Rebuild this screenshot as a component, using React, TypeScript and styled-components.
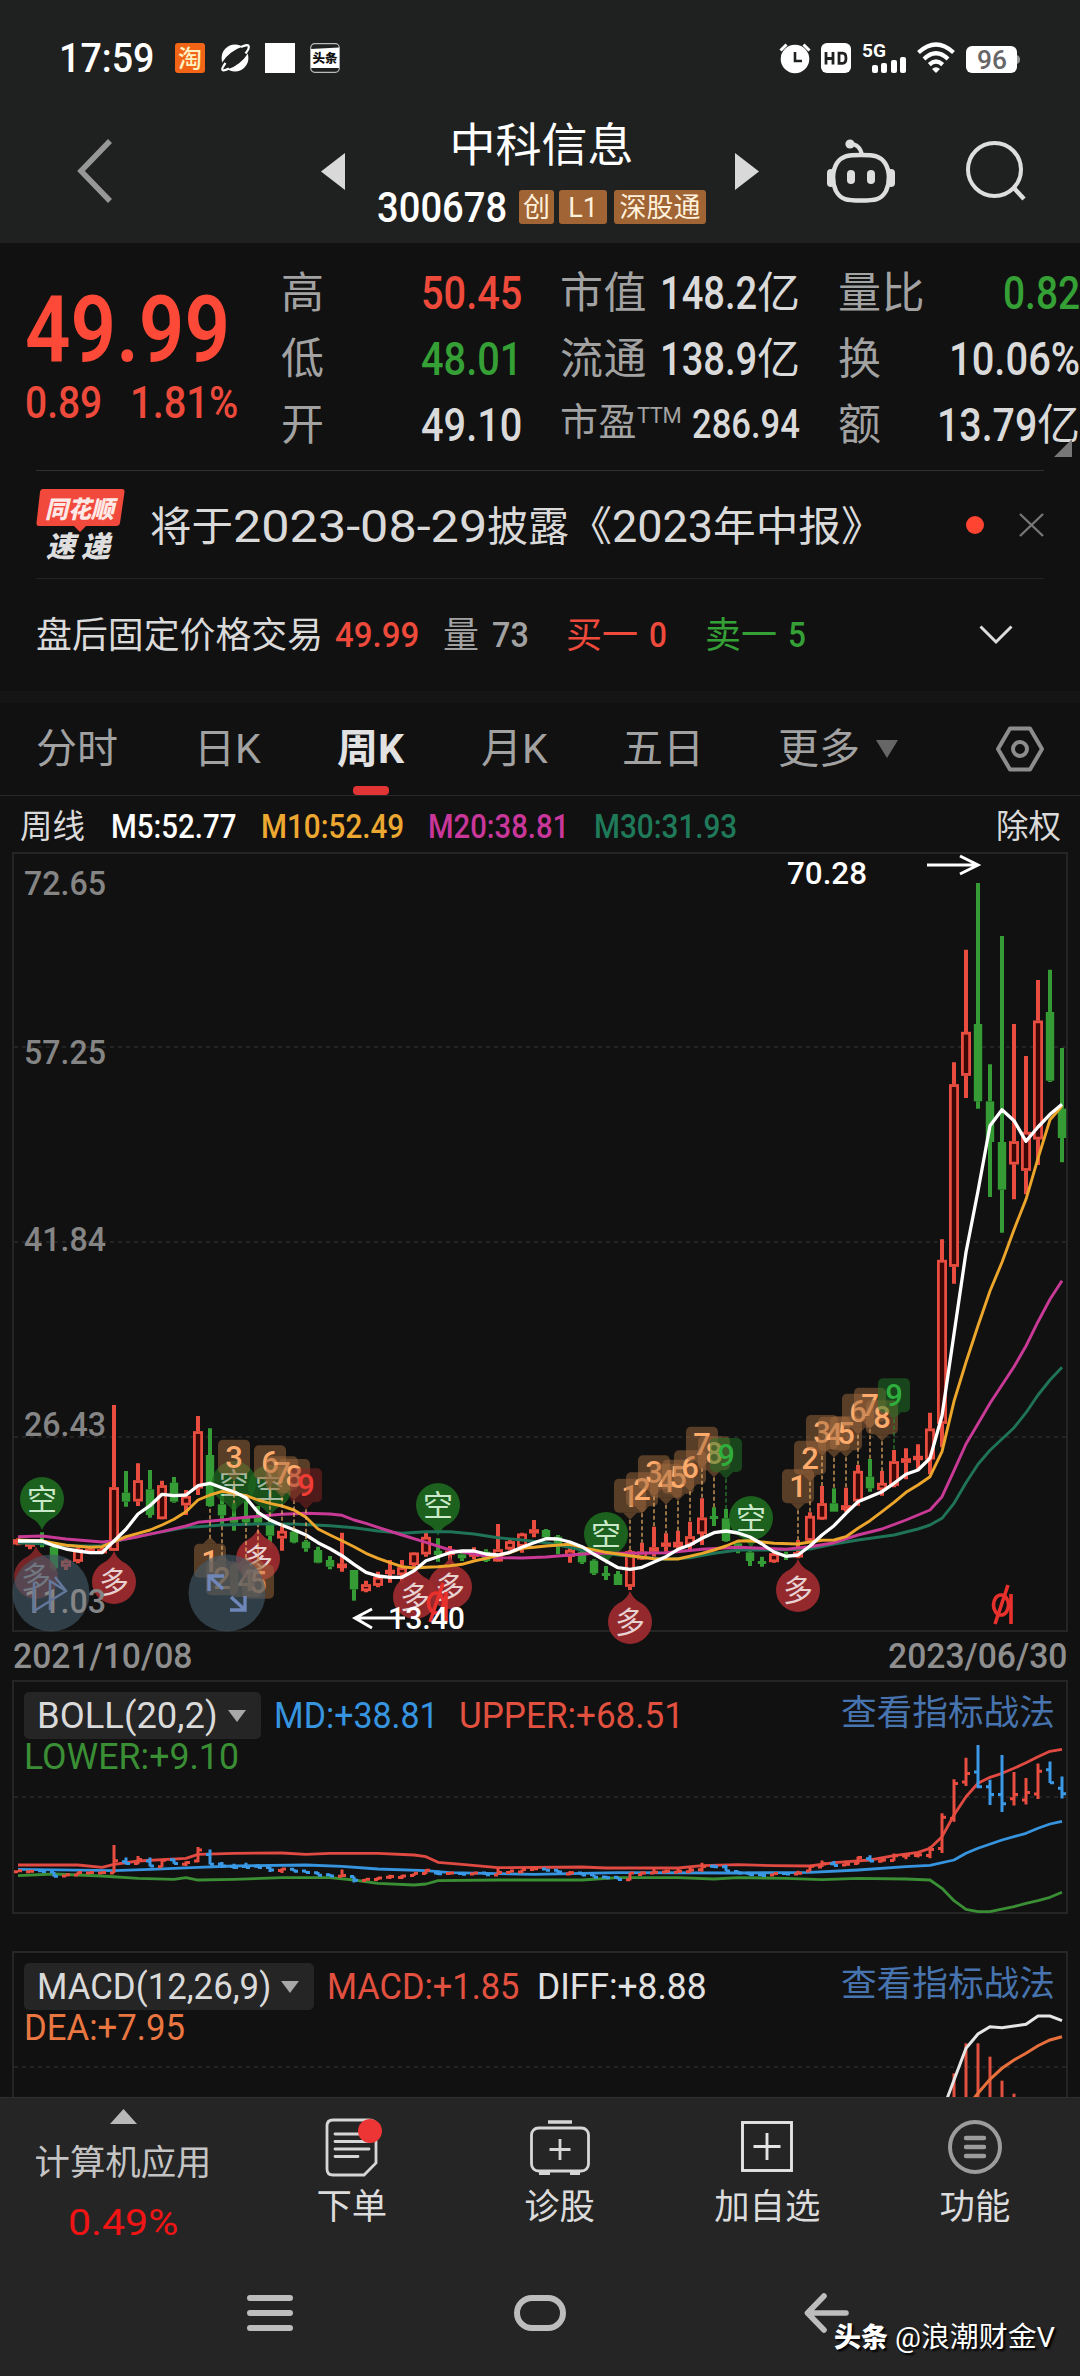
import React, { useLayoutEffect, useRef, useState } from "react";
import styled, { createGlobalStyle } from "styled-components";

const FONT = 'Roboto, "Noto Sans CJK SC", sans-serif';
const RED = "#ee4a3c";
const GREEN = "#35a035";
const GREY = "#a2a2a2";
const LIGHT = "#dadada";

const GlobalStyle = createGlobalStyle`
  html, body { margin: 0; background: #111111; }
  body { width: 1080px; font-family: ${FONT}; color: ${LIGHT}; }
  * { box-sizing: border-box; }
  svg { display: block; overflow: visible; flex: none; }
`;

/* ---------- text fitted to a fixed measure ---------- */

const FitBox = styled.span<{ $w: number; $size: number; $color?: string; $weight?: number; $ml?: number; $lh?: number }>`
  display: block;
  flex: none;
  width: ${(p) => p.$w}px;
  margin-left: ${(p) => p.$ml ?? 0}px;
  font-size: ${(p) => p.$size}px;
  line-height: ${(p) => p.$lh ?? Math.round(p.$size * 1.2)}px;
  color: ${(p) => p.$color ?? "inherit"};
  font-weight: ${(p) => p.$weight ?? 400};
  white-space: nowrap;
`;
const FitInner = styled.span`
  display: inline-block;
  transform-origin: 0 50%;
  white-space: pre;
`;

type FitProps = {
  w: number;
  size: number;
  color?: string;
  weight?: number;
  ml?: number;
  lh?: number;
  children: React.ReactNode;
};

function Fit({ w, size, color, weight, ml, lh, children }: FitProps) {
  const ref = useRef<HTMLSpanElement>(null);
  const [k, setK] = useState(1);
  useLayoutEffect(() => {
    if (ref.current && ref.current.offsetWidth) setK(w / ref.current.offsetWidth);
  }, [w, children]);
  return (
    <FitBox $w={w} $size={size} $color={color} $weight={weight} $ml={ml} $lh={lh}>
      <FitInner ref={ref} style={{ transform: `translateY(1px) scaleX(${k})` }}>
        {children}
      </FitInner>
    </FitBox>
  );
}

/* ---------- status bar and header ---------- */

const Page = styled.main`
  width: 1080px;
  height: 2376px;
  overflow: hidden;
  display: flex;
  flex-direction: column;
  background: #111111;
`;
const Top = styled.header`
  background: #1f2120;
  height: 243px;
  flex: none;
`;
const StatusBar = styled.div`
  display: flex;
  align-items: center;
  justify-content: space-between;
  height: 116px;
  padding: 0 60px 0 59px;
`;
const Cluster = styled.div<{ $gap: number }>`
  display: flex;
  align-items: center;
  gap: ${(p) => p.$gap}px;
`;
const TitleBar = styled.div`
  display: flex;
  align-items: center;
  height: 110px;
  padding-left: 77px;
`;
const Slot = styled.div<{ $ml: number }>`
  margin-left: ${(p) => p.$ml}px;
  flex: none;
`;
const TitleBlock = styled.div`
  margin-left: 32px;
  width: 329px;
  display: flex;
  flex-direction: column;
  align-items: center;
  gap: 20px;
`;
const StockName = styled.h1`
  margin: 0;
  font-size: 46px;
  line-height: 54px;
  height: 52px;
  font-weight: 400;
  color: #fff;
`;
const CodeRow = styled.div`
  display: flex;
  align-items: center;
  height: 34px;
  width: 100%;
`;
const Badge = styled.span<{ $w: number; $ml: number }>`
  width: ${(p) => p.$w}px;
  margin-left: ${(p) => p.$ml}px;
  height: 34px;
  border-radius: 3px;
  background: #a06435;
  color: #fff1da;
  font-size: 27px;
  line-height: 36px;
  text-align: center;
  white-space: nowrap;
  overflow: hidden;
`;

const StatusIcons = () => (
  <>
    <Cluster $gap={15}>
      <Fit w={95} size={40} color="#fff" weight={500}>17:59</Fit>
      <Slot $ml={6}>
        <svg width="30" height="30" viewBox="0 0 30 30">
          <rect width="30" height="30" rx="3" fill="#f26516" />
          <text x="15" y="24" fontSize="24" textAnchor="middle" fill="#fff0c0" fontWeight="500">淘</text>
        </svg>
      </Slot>
      <svg width="30" height="30" viewBox="0 0 30 30">
        <circle cx="15" cy="15" r="13.4" fill="#fff" />
        <ellipse cx="15" cy="15" rx="17" ry="6.6" transform="rotate(-38 15 15)" fill="#1f2120" />
        <path d="M5.500 20C3 23.500 1.500 26 2.500 27C3.500 28 6 27 9 25.500" stroke="#fff" strokeWidth="2.200" fill="none" />
        <path d="M21 4C25 2 28 1.800 28.600 3C29.200 4.500 27.500 8 25.500 10.500" stroke="#fff" strokeWidth="2.200" fill="none" />
      </svg>
      <svg width="30" height="30"><rect width="30" height="30" fill="#fff" /></svg>
      <svg width="30" height="30" viewBox="0 0 30 30">
        <rect x=".7" y=".7" width="28.600" height="28.600" rx="4" fill="#1f2120" stroke="#bbb" strokeWidth="1.200" />
        <path d="M1 6L29 4.500V25H1Z" fill="#fff" />
        <text x="15" y="20" fontSize="12.500" textAnchor="middle" fill="#111" fontWeight="900">头条</text>
      </svg>
    </Cluster>
    <Cluster $gap={10}>
      <svg width="32" height="30" viewBox="0 0 32 30">
        <circle cx="16" cy="16" r="14.300" fill="#fff" />
        <path d="M1.500 7.500L7.500 1.500M30.500 7.500L24.500 1.500" stroke="#fff" strokeWidth="3" />
        <path d="M16 9V18H23" stroke="#1f2120" strokeWidth="2.600" fill="none" />
      </svg>
      <svg width="30" height="30" viewBox="0 0 30 30">
        <rect width="30" height="30" rx="6" fill="#fff" />
        <path d="M5 9V21.500M12 9V21.500M5 15.500H12M18 10.200H21.500Q25 10.200 25 15.200Q25 20.300 21.500 20.300H18Z" stroke="#1f2120" strokeWidth="2.800" fill="none" />
      </svg>
      <svg width="46" height="30" viewBox="0 0 46 30">
        <text x="1" y="14" fontSize="19" fontWeight="700" fill="#fff" textLength="24" lengthAdjust="spacingAndGlyphs">5G</text>
        <rect x="11" y="22" width="6" height="8" rx="2" fill="#fff" />
        <rect x="20" y="20" width="6" height="10" rx="2" fill="#fff" />
        <rect x="30" y="17" width="6" height="13" rx="2" fill="#fff" />
        <rect x="39" y="14" width="6" height="16" rx="2" fill="#fff" />
      </svg>
      <svg width="38" height="30" viewBox="0 0 38 30">
        <path d="M1.500 9.500Q19-6.500 36.500 9.500" stroke="#fff" strokeWidth="4.200" fill="none" />
        <path d="M7 16Q19 4.500 31 16" stroke="#fff" strokeWidth="4.200" fill="none" />
        <path d="M12.300 21.600Q19 15.500 25.700 21.600" stroke="#fff" strokeWidth="4.200" fill="none" />
        <path d="M15 26Q19 22.500 23 26L19 30Z" fill="#fff" />
      </svg>
      <svg width="55" height="30" viewBox="0 0 55 30">
        <rect x="1" y="3" width="51" height="27" rx="6" fill="#fff" />
        <path d="M52 12Q55 13 55 16.500Q55 20 52 21Z" fill="#999" />
        <text x="12" y="26" fontSize="26" fontWeight="500" fill="#666" textLength="30" lengthAdjust="spacingAndGlyphs">96</text>
      </svg>
    </Cluster>
  </>
);

/* ---------- quote block ---------- */

const Quote = styled.section`
  position: relative;
  display: flex;
  height: 227px;
  padding-top: 16px;
  flex: none;
`;
const PriceCol = styled.div`
  width: 281px;
  padding: 31px 0 0 25px;
  flex: none;
`;
const ChangeRow = styled.div`
  display: flex;
  align-items: center;
  height: 65px;
`;
const Stats = styled.div`
  display: grid;
  grid-template-columns: 241px 240px 242px;
  grid-auto-rows: 66px;
  column-gap: 38px;
`;
const Stat = styled.div`
  display: flex;
  align-items: center;
  justify-content: space-between;
`;
const StatLabel = styled.span<{ $size?: number }>`
  color: ${GREY};
  font-size: ${(p) => p.$size ?? 43}px;
  line-height: 60px;
  padding-top: 1px;
  letter-spacing: 0.5px;
  white-space: nowrap;
`;
const Sup = styled.span`
  font-size: 22px;
  letter-spacing: -0.5px;
  position: relative;
  top: -12px;
`;
const Value = styled.span`
  display: flex;
  align-items: center;
`;
const Corner = styled.i`
  position: absolute;
  right: 8px;
  bottom: 13px;
  border-left: 18px solid transparent;
  border-bottom: 18px solid #777;
`;
const Rule = styled.div<{ $c?: string; $full?: boolean }>`
  height: 1px;
  margin: 0 ${(p) => (p.$full ? 0 : 36)}px;
  background: ${(p) => p.$c ?? "#303030"};
  flex: none;
`;

type Num = { label: string; text: string; w: number; unit?: boolean; color?: string };
const STATS: Num[] = [
  { label: "高", text: "50.45", w: 101, color: RED },
  { label: "市值", text: "148.2", w: 97, unit: true },
  { label: "量比", text: "0.82", w: 77, color: GREEN },
  { label: "低", text: "48.01", w: 101, color: GREEN },
  { label: "流通", text: "138.9", w: 97, unit: true },
  { label: "换", text: "10.06%", w: 131 },
  { label: "开", text: "49.10", w: 101 },
  { label: "市盈", text: "286.94", w: 108 },
  { label: "额", text: "13.79", w: 100, unit: true },
];

/* ---------- news and after-hours rows ---------- */

const News = styled.section`
  display: flex;
  align-items: center;
  height: 107px;
  padding: 0 36px;
  flex: none;
`;
const Headline = styled.div`
  display: flex;
  align-items: center;
  margin-left: 25px;
  padding-top: 3px;
`;
const Push = styled.span`
  margin-left: auto;
`;
const After = styled.section`
  display: flex;
  align-items: center;
  height: 112px;
  padding: 0 67px 0 36px;
  flex: none;
`;
const Band = styled.div`
  height: 12px;
  background: #151515;
  flex: none;
`;

/* ---------- tabs ---------- */

const Tabs = styled.nav`
  display: flex;
  align-items: center;
  height: 92px;
  padding-left: 36px;
  flex: none;
`;
const Tab = styled.span<{ $w: number; $ml?: number; $active?: boolean }>`
  position: relative;
  width: ${(p) => p.$w}px;
  margin-left: ${(p) => p.$ml ?? 0}px;
  font-size: 41px;
  line-height: 92px;
  white-space: nowrap;
  color: ${(p) => (p.$active ? "#e2e2e2" : GREY)};
  font-weight: ${(p) => (p.$active ? 700 : 400)};
  &::after {
    content: "";
    display: ${(p) => (p.$active ? "block" : "none")};
    position: absolute;
    left: 16px;
    bottom: 0;
    width: 36px;
    height: 9px;
    border-radius: 4px;
    background: #e13535;
  }
`;
const MaRow = styled.div`
  display: flex;
  align-items: center;
  height: 56px;
  padding: 4px 19px 0 20px;
  flex: none;
`;

/* ---------- charts ---------- */

const ChartBox = styled.section`
  height: 780px;
  flex: none;
  z-index: 1;
`;
const Dates = styled.div`
  display: flex;
  justify-content: space-between;
  align-items: center;
  height: 48px;
  padding: 0 13px;
  color: #8e8e8e;
  flex: none;
`;
const Panel = styled.section<{ $h: number; $mb?: number }>`
  position: relative;
  height: ${(p) => p.$h}px;
  margin-bottom: ${(p) => p.$mb ?? 0}px;
  padding: 12px 25px 0 24px;
  overflow: hidden;
  flex: none;
`;
const PanelPlot = styled.div`
  position: absolute;
  left: 0;
  top: 0;
`;
const PanelRow = styled.div<{ $h: number }>`
  position: relative;
  display: flex;
  align-items: center;
  height: ${(p) => p.$h}px;
`;
const Picker = styled.span<{ $w: number }>`
  display: flex;
  align-items: center;
  justify-content: space-between;
  width: ${(p) => p.$w}px;
  height: 47px;
  padding: 0 15px 0 13px;
  border-radius: 5px;
  background: #252525;
`;
const Guide = styled.span`
  margin-left: auto;
  padding-bottom: 4px;
  font-size: 35.7px;
  line-height: 43px;
  color: #4774ae;
`;

const X = (i: number) => 18 + 12 * i;
const Y = (u: number) => 1360 + u / 3;

type Candle = [number, number, number, number, 0 | 1];
/* high, body top, body bottom, low, rising */
const CANDLES: Candle[] = [
  [535, 538, 553, 556, 1], [540, 548, 553, 568, 1], [517, 540, 550, 562, 0], [558, 560, 625, 632, 0],
  [598, 602, 620, 630, 1], [555, 567, 605, 610, 1], [560, 566, 572, 575, 1], [562, 568, 574, 577, 1],
  [135, 382, 572, 572, 1], [333, 398, 425, 440, 0], [310, 361, 424, 438, 1], [330, 388, 465, 473, 0],
  [362, 376, 477, 478, 1], [351, 368, 425, 428, 0], [390, 408, 436, 465, 1], [168, 214, 385, 405, 1],
  [205, 285, 438, 440, 0], [400, 433, 466, 495, 0], [430, 470, 488, 512, 0], [415, 470, 487, 490, 0],
  [438, 468, 488, 495, 0], [480, 487, 527, 560, 0], [500, 513, 535, 572, 1], [510, 515, 547, 550, 0],
  [540, 545, 565, 575, 0], [560, 570, 608, 610, 0], [588, 600, 620, 628, 0], [518, 611, 624, 635, 1],
  [630, 630, 688, 722, 0], [662, 673, 693, 697, 1], [635, 651, 677, 682, 1], [600, 630, 642, 668, 1],
  [600, 622, 645, 668, 1], [577, 578, 615, 620, 1], [515, 531, 583, 590, 1], [535, 572, 585, 605, 0],
  [558, 573, 582, 600, 1], [575, 583, 595, 603, 0], [562, 576, 590, 598, 1], [568, 575, 603, 606, 0],
  [492, 568, 604, 605, 1], [540, 544, 568, 572, 1], [518, 521, 560, 578, 1], [480, 508, 520, 532, 1],
  [507, 510, 532, 537, 0], [525, 530, 560, 583, 0], [545, 570, 590, 608, 1], [572, 575, 607, 612, 0],
  [598, 602, 640, 645, 0], [618, 639, 648, 660, 0], [633, 642, 675, 675, 0], [570, 574, 680, 690, 1],
  [548, 575, 598, 600, 1], [500, 562, 575, 590, 1], [520, 548, 560, 575, 1], [512, 546, 562, 575, 1],
  [485, 529, 555, 570, 1], [415, 473, 522, 555, 1], [442, 468, 477, 498, 0], [447, 475, 543, 545, 0],
  [540, 550, 572, 580, 0], [570, 577, 603, 618, 0], [590, 603, 612, 620, 0], [575, 580, 606, 608, 1],
  [575, 582, 590, 600, 0], [540, 577, 592, 595, 1], [457, 468, 542, 545, 1], [378, 430, 478, 480, 1],
  [385, 430, 455, 455, 0], [383, 436, 450, 455, 1], [315, 333, 424, 437, 1], [297, 350, 385, 395, 0],
  [333, 369, 390, 407, 1], [270, 304, 377, 382, 1], [265, 295, 308, 358, 1], [253, 288, 300, 330, 1],
  [158, 206, 298, 343, 1], [-362, -300, 191, 262, 1], [-893, -827, -280, -229, 1], [-1231, -984, -853, -786, 1],
  [-1431, -1008, -776, -754, 0], [-887, -776, -654, -489, 0], [-1272, -654, -511, -382, 0], [-1008, -656, -587, -482, 1],
  [-912, -684, -568, -497, 1], [-1140, -1018, -662, -585, 1], [-1171, -1044, -838, -834, 0], [-936, -754, -666, -593, 0],
];

type Pts = [number, number][];
const seq = (from: number, v: number[]): Pts => v.map((u, k) => [from + k, u]);

const M5: Pts = seq(0, [
  543, 543, 543, 557, 567, 573, 578, 578, 543, 508, 462, 437, 403, 407, 405, 377, 370, 383, 395, 413, 457, 480, 496, 509,
  525, 548, 566, 587, 613, 637, 648, 652, 652, 632, 602, 590, 578, 573, 573, 582, 585, 577, 562, 548, 536, 537, 546, 560,
  583, 603, 623, 628, 622, 606, 590, 568, 555, 535, 518, 513, 519, 531, 552, 576, 589, 585, 558, 525, 497, 460, 425, 410,
  395, 370, 343, 330, 295, 167, -78, -323, -507, -703, -751, -718, -656, -699, -737, -767,
]);
const M10: Pts = [
  [0, 540], [2, 543], [4, 556], [6, 562], [7, 560],
  ...seq(8, [545, 530, 520, 510, 495, 478, 455, 420, 405, 394, 400, 407, 420, 430, 438, 450, 472, 507, 525, 542, 560, 580, 595, 608, 620, 624, 622, 620, 617, 613, 603, 595, 587, 578, 565, 562, 558]),
  [46, 553], [47, 562], [49, 577], [51, 587], [53, 596], [55, 597], [57, 580], [58, 570], [59, 558], [60, 543], [61, 542], [63, 550], [65, 552],
  ...seq(66, [546, 541, 540, 530, 505, 482, 455, 427, 397, 375, 350, 275, 124, 7, -103, -207, -293, -391, -482, -605, -721, -762]),
];
const M20: Pts = [
  [0, 530], [2, 528], [4, 537], [7, 546], [8, 543], [10, 530], [12, 515], [14, 498], [15, 487], [17, 480], [19, 472], [22, 463],
  [24, 460], [26, 462], [27, 466], [28, 480], [29, 490], [30, 502], [32, 525], [34, 547], [36, 570], [38, 582], [40, 593], [42, 594],
  [44, 591], [46, 585], [48, 580], [51, 580], [54, 578], [57, 568], [60, 562], [62, 565], [64, 568], [66, 560], [68, 548], [70, 525],
  [72, 507], [74, 480], [76, 450], ...seq(77, [410, 332, 252, 191, 130, 75, 20, -42, -115, -182, -238]),
];
const M30: Pts = [
  [0, 548], [3, 553], [5, 558], [7, 557], [8, 545], [10, 530], [12, 515], [14, 502], [15, 500], [17, 495], [20, 492], [23, 492],
  [26, 497], [28, 503], [30, 513], [32, 520], [34, 515], [36, 515], [38, 522], [40, 533], [42, 540], [44, 548], [47, 570], [50, 585],
  [54, 598], [56, 593], [58, 580], [60, 570], [63, 570], [66, 567], [68, 552], [70, 540], [73, 525], [75, 507], [76, 495], [77, 475],
  [78, 430], [79, 368], [80, 313], [81, 271], [82, 237], [83, 203], [84, 158], [85, 105], [86, 60], [87, 22],
];

const line = (p: Pts, y: (u: number) => number) => p.map(([i, u]) => `${X(i)},${y(u).toFixed(1)}`).join(" ");

const CandleShape = ({ i, c }: { i: number; c: Candle }) => {
  const [h, t, b, l, up] = c;
  const x = X(i);
  const col = up ? "#e84d40" : "#359b35";
  const hh = Math.max((b - t) / 3, 2.5);
  return (
    <g>
      <path d={`M${x} ${Y(h)}V${Y(t)}M${x} ${Y(t) + hh}V${Y(l)}`} stroke={col} strokeWidth="4" />
      {up ? (
        <rect x={x - 3.6} y={Y(t) + 1.2} width="7.200" height={Math.max(hh - 2.4, 1.5)} fill="#3a0907" stroke={col} strokeWidth="2.800" />
      ) : (
        <rect x={x - 4.2} y={Y(t)} width="8.400" height={hh} fill={col} />
      )}
    </g>
  );
};

/* round 空 / 多 signal pin */
const Pin = ({ x, y, up, dim }: { x: number; y: number; up?: boolean; dim?: boolean }) => (
  <g opacity={dim ? 0.75 : 0.95}>
    <circle cx={x} cy={y} r="22" fill={up ? "#9a2b2e" : "#1d661e"} />
    <path
      d={up ? `M${x - 12} ${y - 18}Q${x - 3} ${y - 23} ${x} ${y - 31}Q${x + 3} ${y - 23} ${x + 12} ${y - 18}Z` : `M${x - 12} ${y + 18}Q${x - 3} ${y + 23} ${x} ${y + 31}Q${x + 3} ${y + 23} ${x + 12} ${y + 18}Z`}
      fill={up ? "#9a2b2e" : "#1d661e"}
    />
    <text x={x} y={y + 11} fontSize="30" textAnchor="middle" fill={up ? "#f4dcdc" : "#d4f4d4"} fontFamily={FONT}>
      {up ? "多" : "空"}
    </text>
  </g>
);

type TagData = [number, number, string, ("up" | "green" | "red")?];
const TAGS: TagData[] = [
  [16, 602, "1", "up"], [17, 655, "2", "up"], [19, 660, "4", "up"], [20, 665, "5", "up"], [18, 290, "3"], [21, 307, "6"],
  [22, 340, "7"], [23, 348, "8"], [24, 376, "9", "red"],
  [51, 407, "1"], [52, 388, "2"], [53, 337, "3"], [54, 362, "4"], [55, 350, "5"], [56, 322, "6"], [57, 251, "7"], [58, 280, "8"], [59, 285, "9", "green"],
  [65, 379, "1"], [66, 293, "2"], [67, 216, "3"], [68, 221, "4"], [69, 220, "5"], [70, 152, "6"], [71, 134, "7"], [72, 172, "8"], [73, 106, "9", "green"],
];
const Tag = ({ d }: { d: TagData }) => {
  const [i, u, n, kind] = d;
  const x = X(i);
  const y = Y(u);
  const up = kind === "up";
  const fill = kind === "green" ? "#1f7a25" : kind === "red" ? "#8c2424" : "#a06a3e";
  const text = kind === "green" ? "#2fae3e" : kind === "red" ? "#f03c34" : "#ffab6c";
  const target = up ? Y(CANDLES[i][3]) : Y(CANDLES[i][0]);
  return (
    <g>
      <line x1={x} x2={x} y1={up ? y - 22 : y + 24} y2={target} stroke={kind === "green" ? "#2c8a34" : "#f0b56a"} strokeWidth="1.200" strokeDasharray="4 2.500" />
      <rect x={x - 16} y={y - 17} width="32" height="34" rx="5" fill={fill} opacity=".5" />
      <path d={up ? `M${x - 7} ${y - 17}L${x} ${y - 24}L${x + 7} ${y - 17}Z` : `M${x - 7} ${y + 17}L${x} ${y + 24}L${x + 7} ${y + 17}Z`} fill={fill} opacity=".5" />
      <text x={x} y={y + 11} fontSize="31" fontWeight="500" textAnchor="middle" fill={text} fontFamily={FONT} opacity={up && n !== "1" ? 0.7 : 1}>{n}</text>
    </g>
  );
};

/* ex-rights mark */
const ExMark = ({ x, y }: { x: number; y: number }) => (
  <g stroke="#e8302c" fill="none" strokeWidth="3.600">
    <ellipse cx={x - 2} cy={y} rx="7.500" ry="10" />
    <path d={`M${x + 8} ${y - 11}V${y + 19}M${x + 5} ${y - 20}L${x - 8} ${y + 19}`} />
  </g>
);

const AxisText = ({ y, children }: { y: number; children: string }) => (
  <text x="24" y={y + 12} fontSize="34" fontWeight="500" fill="#858585" textLength="82" lengthAdjust="spacingAndGlyphs">{children}</text>
);

const MainChart = () => (
  <svg width="1080" height="780" viewBox="0 852 1080 780" fontFamily={FONT}>
    <rect x="13" y="853" width="1054" height="778" fill="none" stroke="#282828" strokeWidth="1.800" />
    {[1047, 1242, 1437].map((y) => (
      <line key={y} x1="14" x2="1066" y1={y} y2={y} stroke="#2b2b2b" strokeWidth="1.600" strokeDasharray="4 4" />
    ))}
    <AxisText y={883}>72.65</AxisText>
    <AxisText y={1052}>57.25</AxisText>
    <AxisText y={1239}>41.84</AxisText>
    <AxisText y={1424}>26.43</AxisText>
    {CANDLES.map((c, i) => <CandleShape key={i} i={i} c={c} />)}
    <Pin x={42} y={1499} />
    <Pin x={234} y={1483} dim />
    <Pin x={270} y={1487} dim />
    <Pin x={438} y={1505} />
    <Pin x={606} y={1534} />
    <Pin x={751} y={1518} />
    <Pin x={114} y={1582} up />
    <Pin x={258} y={1559} up />
    <Pin x={415} y={1597} up />
    <Pin x={450} y={1587} up />
    <Pin x={630} y={1622} up />
    <Pin x={798} y={1590} up />
    <g fill="none" strokeWidth="2.900" strokeLinejoin="round">
      <polyline points={line(M30, Y)} stroke="#1f7358" />
      <polyline points={line(M20, Y)} stroke="#c83a96" />
      <polyline points={line(M10, Y)} stroke="#eda62c" />
      <polyline points={line(M5, Y)} stroke="#fff" strokeWidth="3.300" />
    </g>
    <Pin x={36} y={1577} up dim />
    {TAGS.map((d, k) => <Tag key={k} d={d} />)}
    <g fill="#445a6a" opacity=".62">
      <circle cx="51" cy="1593" r="38.500" />
      <circle cx="227" cy="1593" r="38.500" />
    </g>
    <AxisText y={1601}>11.03</AxisText>
    <path d="M34 1582V1611L66 1591L55 1577M50 1610V1581L66 1591" stroke="#63779b" strokeWidth="2.500" fill="none" />
    <g stroke="#6f86b8" strokeWidth="3.400" fill="none">
      <path d="M209 1591V1576H224M210 1577L223 1589" />
      <path d="M245 1596V1610H230M244 1609L231 1597" />
    </g>
    <text x="787" y="884" fontSize="31" fontWeight="500" fill="#fff" textLength="80" lengthAdjust="spacingAndGlyphs">70.28</text>
    <path d="M927 865H978M960 856L978 865L960 874" stroke="#fff" strokeWidth="3" fill="none" />
    <ExMark x={438} y={1603} />
    <ExMark x={1003} y={1605} />
    <text x="388" y="1629" fontSize="31" fontWeight="500" fill="#fff" textLength="77" lengthAdjust="spacingAndGlyphs">13.40</text>
    <path d="M405 1618H355M372 1609L355 1618L372 1628" stroke="#fff" strokeWidth="3" fill="none" />
  </svg>
);

const BY = (v: number) => 1660 + v / 3;
const toBoll = (u: number) => 529 + 0.1916 * u;
const UPPER: Pts = [
  [0, 615], [5, 615], [7, 622], [8, 613], [10, 603], [14, 595], [15, 583], [18, 580], [22, 579], [24, 583], [26, 580], [30, 580], [33, 585],
  [34, 590], [35, 607], [37, 613], [40, 623], [47, 621], [49, 624], [55, 624], [57, 617], [60, 614], [63, 617], [66, 618], [68, 608], [71, 600],
  [73, 587], [75, 577], [76, 565], [77, 530], [78, 465], [79, 410], [80, 370], [81, 352], [82, 340], [83, 325], [84, 308], [85, 290], [86, 274], [87, 268],
];
const MID: Pts = [
  [0, 628], [8, 632], [11, 628], [15, 622], [18, 618], [24, 615], [27, 619], [30, 627], [34, 632], [36, 638], [43, 643], [50, 638], [60, 639],
  [66, 637], [70, 630], [74, 620], [76, 616], [78, 600], [79, 580], [80, 565], [82, 540], [84, 520], [85, 505], [86, 492], [87, 484],
];
const LOWER: Pts = [
  [0, 647], [3, 642], [7, 648], [10, 655], [13, 658], [14, 653], [15, 660], [18, 658], [22, 653], [26, 653], [28, 660], [30, 670], [33, 675],
  [34, 672], [35, 662], [40, 660], [47, 660], [50, 653], [55, 653], [58, 657], [60, 653], [64, 655], [67, 659], [70, 655], [74, 657], [76, 660],
  [77, 685], [78, 722], [79, 748], [80, 755], [81, 755], [83, 740], [84, 730], [85, 722], [86, 712], [87, 697],
];

const BollPlot = () => (
  <svg width="1080" height="234" viewBox="0 1680 1080 234">
    <rect x="13" y="1681" width="1054" height="232" fill="none" stroke="#282828" strokeWidth="1.800" />
    <line x1="14" x2="1066" y1="1797" y2="1797" stroke="#2b2b2b" strokeWidth="1.600" strokeDasharray="4 4" />
    <g fill="none" strokeWidth="2.800" strokeLinejoin="round">
      <polyline points={line(LOWER, BY)} stroke="#3a8f35" />
      <polyline points={line(MID, BY)} stroke="#3795e0" />
      <polyline points={line(UPPER, BY)} stroke="#e04a42" />
    </g>
    {CANDLES.map(([h, t, b, l, up], i) => {
      const f = (u: number) => BY(toBoll(u)).toFixed(1);
      const x = X(i);
      return (
        <path
          key={i}
          d={`M${x} ${f(h)}V${f(l)}M${x - 4} ${f(up ? b : t)}H${x}M${x} ${f(up ? t : b)}H${x + 4}`}
          stroke={up ? "#e84d40" : "#3b9ae8"}
          strokeWidth="3"
        />
      );
    })}
  </svg>
);

const DIFF: Pts = [[77.4, 1318], [78, 1260], [79, 1165], [80, 1122], [81, 1100], [82, 1103], [83, 1098], [84, 1093], [85, 1068], [86, 1068], [87, 1082]];
const DEA: Pts = [[79.6, 1318], [80, 1300], [81, 1258], [82, 1225], [83, 1200], [84, 1180], [85, 1157], [86, 1140], [87, 1130]];
const HIST: Pts = [[78, 1240], [79, 1150], [80, 1150], [81, 1190], [82, 1262], [83, 1301]];

const MacdPlot = () => (
  <svg width="1080" height="146" viewBox="0 1951 1080 146">
    <path d="M13 2100V1952H1067V2100" fill="none" stroke="#282828" strokeWidth="1.800" />
    <line x1="14" x2="1066" y1="2067" y2="2067" stroke="#2b2b2b" strokeWidth="1.600" strokeDasharray="4 4" />
    {HIST.map(([i, v]) => <line key={i} x1={X(i)} x2={X(i)} y1={BY(v)} y2="2100" stroke="#e2503f" strokeWidth="3" />)}
    <polyline points={line(DIFF, BY)} fill="none" stroke="#e6e6e6" strokeWidth="3" />
    <polyline points={line(DEA, BY)} fill="none" stroke="#e8703c" strokeWidth="3" />
  </svg>
);

const Down = () => (
  <svg width="18" height="12" viewBox="0 0 18 12"><path d="M0 0H18L9 12Z" fill="#a8a8a8" /></svg>
);

/* ---------- bottom ---------- */

const Bottom = styled.footer`
  position: relative;
  height: 279px;
  background: #252525;
  border-top: 1px solid #303030;
  flex: none;
`;
const Tools = styled.div`
  display: grid;
  grid-template-columns: 248px repeat(4, 207.7px);
  height: 162px;
`;
const Sector = styled.div`
  display: flex;
  flex-direction: column;
  align-items: center;
  padding: 11px 2px 0 0;
  color: #c4c4c4;
`;
const SectorName = styled.span`
  font-size: 35.4px;
  line-height: 44px;
  margin: 17px 0 15px;
`;
const Tool = styled.div`
  display: flex;
  flex-direction: column;
  align-items: center;
  padding-top: 20px;
`;
const ToolLabel = styled.span`
  margin-top: 11px;
  font-size: 35.4px;
  line-height: 41px;
  color: #dcdcdc;
`;
const NavBar = styled.div`
  display: flex;
  align-items: center;
  height: 106px;
  padding-left: 247px;
`;
const Watermark = styled.div`
  position: absolute;
  left: 834px;
  top: 222px;
  display: flex;
  align-items: center;
  color: #fff;
  text-shadow: 2px 2px 2px #000;
`;

const DocIcon = () => (
  <svg width="54" height="58" viewBox="0 0 54 58">
    <path d="M8 2H44Q51 2 51 9V45L39 57H8Q2 57 2 51V8Q2 2 8 2Z" fill="none" stroke="#d6d6d6" strokeWidth="2.800" />
    <path d="M10 16H42M10 23.500H44M10 31H44M10 38.500H33" stroke="#d6d6d6" strokeWidth="2.800" strokeLinecap="round" />
    <circle cx="45" cy="13" r="12" fill="#ee3535" />
  </svg>
);
const KitIcon = () => (
  <svg width="60" height="58" viewBox="0 0 60 58">
    <path d="M18 4H42" stroke="#d6d6d6" strokeWidth="3.500" />
    <rect x="1.500" y="10" width="57" height="43" rx="7" fill="none" stroke="#d6d6d6" strokeWidth="2.800" />
    <path d="M30 21V42M19.500 31.500H40.500" stroke="#d6d6d6" strokeWidth="2.800" />
    <path d="M9 55H20M40 55H50" stroke="#d6d6d6" strokeWidth="4" />
  </svg>
);
const AddIcon = () => (
  <svg width="52" height="58" viewBox="0 0 52 58">
    <rect x="1.500" y="4.500" width="49" height="48" fill="none" stroke="#e4e4e4" strokeWidth="2.900" />
    <path d="M26 15V42M12.500 28.500H39.500" stroke="#e4e4e4" strokeWidth="2.900" />
  </svg>
);
const MenuIcon = () => (
  <svg width="54" height="58" viewBox="0 0 54 58">
    <circle cx="27" cy="29" r="25" fill="none" stroke="#9c9c9c" strokeWidth="4" />
    <path d="M18 20H36M18 29H36M18 38H36" stroke="#9c9c9c" strokeWidth="4.400" strokeLinecap="round" />
  </svg>
);

export default function App() {
  return (
    <>
      <GlobalStyle />
      <Page>
        <Top>
          <StatusBar><StatusIcons /></StatusBar>
          <TitleBar>
            <svg width="35" height="64" viewBox="0 0 35 64"><path d="M33 2L4 32L33 62" fill="none" stroke="#979797" strokeWidth="5.500" /></svg>
            <Slot $ml={209}>
              <svg width="24" height="37" viewBox="0 0 24 37"><path d="M24 0V37L0 18.500Z" fill="#d9d9d9" /></svg>
            </Slot>
            <TitleBlock>
              <StockName>中科信息</StockName>
              <CodeRow>
                <Fit w={130} size={42} color="#fff" weight={500} lh={34}>300678</Fit>
                <Badge $w={35} $ml={12}>创</Badge>
                <Badge $w={48} $ml={5}>L1</Badge>
                <Badge $w={92} $ml={7}>深股通</Badge>
              </CodeRow>
            </TitleBlock>
            <Slot $ml={29}>
              <svg width="24" height="37" viewBox="0 0 24 37"><path d="M0 0V37L24 18.500Z" fill="#d9d9d9" /></svg>
            </Slot>
            <Slot $ml={67}>
              <svg width="70" height="64" viewBox="0 0 70 64">
                <g fill="none" stroke="#dedede" strokeWidth="4.400">
                  <path d="M35 16C49 16 54 17 59 24C64 32 64 43 60 52C55 61 49 61.500 35 61.500C21 61.500 15 61 10 52C6 43 6 32 11 24C16 17 21 16 35 16Z" />
                  <path d="M24 5Q34 5 36 16" strokeWidth="4" />
                </g>
                <circle cx="24" cy="5" r="4.600" fill="#dedede" />
                <rect x="1" y="30" width="8" height="18" rx="4" fill="#dedede" />
                <rect x="61" y="30" width="8" height="18" rx="4" fill="#dedede" />
                <rect x="21" y="31" width="8" height="14" rx="4" fill="#dedede" />
                <rect x="41" y="31" width="8" height="14" rx="4" fill="#dedede" />
              </svg>
            </Slot>
            <Slot $ml={70}>
              <svg width="60" height="60" viewBox="0 0 60 60">
                <ellipse cx="28.500" cy="28.500" rx="26.500" ry="26.500" fill="none" stroke="#dedede" strokeWidth="4" />
                <path d="M47 46L58 58" stroke="#dedede" strokeWidth="4.500" />
              </svg>
            </Slot>
          </TitleBar>
        </Top>

        <Quote>
          <PriceCol>
            <Fit w={205} size={93} lh={79} color="#fd4a38" weight={600}>49.99</Fit>
            <ChangeRow>
              <Fit w={77} size={45} color={RED} weight={500}>0.89</Fit>
              <Fit w={108} size={45} ml={28} color={RED} weight={500}>1.81%</Fit>
            </ChangeRow>
          </PriceCol>
          <Stats>
            {STATS.map((s) => (
              <Stat key={s.label}>
                <StatLabel $size={s.label === "市盈" ? 38 : 43}>
                  {s.label}
                  {s.label === "市盈" && <Sup>TTM</Sup>}
                </StatLabel>
                <Value>
                  <Fit w={s.w} size={s.label === "市盈" ? 40 : 46} lh={60} color={s.color ?? LIGHT} weight={500}>{s.text}</Fit>
                  {s.unit && <Fit w={43} size={43} lh={60}>亿</Fit>}
                </Value>
              </Stat>
            ))}
          </Stats>
          <Corner />
        </Quote>
        <Rule />

        <News>
          <svg width="89" height="72" viewBox="0 0 89 72" fontFamily={FONT}>
            <path d="M7 0H86Q89 0 88.500 3L84 34Q83.500 37 80 37H50L44 43L38 37H3Q0 37 .5 34L4 3Q4.500 0 7 0Z" fill="#f1493c" />
            <text x="9" y="28.500" fontSize="24" fontWeight="900" fontStyle="italic" fill="#ffe9e6" textLength="69" lengthAdjust="spacingAndGlyphs">同花顺</text>
            <text x="10" y="68" fontSize="29" fontWeight="900" fontStyle="italic" fill="#dedede" textLength="64" lengthAdjust="spacing">速递</text>
          </svg>
          <Headline>
            <Fit w={83} size={41}>将于</Fit>
            <Fit w={254} size={45}>2023-08-29</Fit>
            <Fit w={82} size={41}>披露</Fit>
            <Fit w={43} size={41}>《</Fit>
            <Fit w={101} size={45}>2023</Fit>
            <Fit w={128} size={41}>年中报</Fit>
            <Fit w={43} size={41}>》</Fit>
          </Headline>
          <Push>
            <svg width="78" height="24" viewBox="0 0 78 24">
              <circle cx="9" cy="12" r="9" fill="#ff4432" />
              <path d="M54 1L77 23M77 1L54 23" stroke="#777" strokeWidth="2.400" />
            </svg>
          </Push>
        </News>
        <Rule $c="#232323" />

        <After>
          <Fit w={287} size={36}>盘后固定价格交易</Fit>
          <Fit w={84} size={35} ml={12} color={RED} weight={500}>49.99</Fit>
          <Fit w={36} size={36} ml={24} color={GREY}>量</Fit>
          <Fit w={37} size={35} ml={13} color={GREY} weight={500}>73</Fit>
          <Fit w={72} size={36} ml={37} color={RED}>买一</Fit>
          <Fit w={18} size={35} ml={11} color={RED} weight={500}>0</Fit>
          <Fit w={72} size={36} ml={38} color={GREEN}>卖一</Fit>
          <Fit w={18} size={35} ml={11} color={GREEN} weight={500}>5</Fit>
          <Push>
            <svg width="34" height="20" viewBox="0 0 34 20"><path d="M1.500 1.500L17 17L32.500 1.500" fill="none" stroke="#dcdcdc" strokeWidth="3" /></svg>
          </Push>
        </After>
        <Band />

        <Tabs>
          <Tab $w={82}>分时</Tab>
          <Tab $w={68} $ml={76}>日K</Tab>
          <Tab $w={69} $ml={75} $active>周K</Tab>
          <Tab $w={68} $ml={75}>月K</Tab>
          <Tab $w={82} $ml={73}>五日</Tab>
          <Tab $w={82} $ml={74}>更多</Tab>
          <Slot $ml={16}>
            <svg width="22" height="18" viewBox="0 0 22 18"><path d="M0 0H22L11 18Z" fill="#666" /></svg>
          </Slot>
          <Slot $ml={98}>
            <svg width="48" height="46" viewBox="0 0 48 46">
              <path d="M14 2.500H34L46 23L34 43.500H14L2 23Z" fill="none" stroke="#8d8d8d" strokeWidth="4" strokeLinejoin="round" />
              <circle cx="24" cy="23" r="7" fill="none" stroke="#8d8d8d" strokeWidth="4" />
            </svg>
          </Slot>
        </Tabs>
        <Rule $full $c="#2a2a2a" />

        <MaRow>
          <Fit w={65} size={32.5}>周线</Fit>
          <Fit w={126} size={33} ml={26} color="#fff" weight={500}>M5:52.77</Fit>
          <Fit w={143} size={33} ml={24} color="#eda832" weight={500}>M10:52.49</Fit>
          <Fit w={141} size={33} ml={24} color="#c9379a" weight={500}>M20:38.81</Fit>
          <Fit w={143} size={33} ml={25} color="#1f7a5a" weight={500}>M30:31.93</Fit>
          <Push><Fit w={65} size={32.5}>除权</Fit></Push>
        </MaRow>

        <ChartBox><MainChart /></ChartBox>
        <Dates>
          <Fit w={179} size={35} weight={500}>2021/10/08</Fit>
          <Fit w={179} size={35} weight={500}>2023/06/30</Fit>
        </Dates>

        <Panel $h={234} $mb={37}>
          <PanelPlot><BollPlot /></PanelPlot>
          <PanelRow $h={47}>
            <Picker $w={237}><Fit w={181} size={36}>BOLL(20,2)</Fit><Down /></Picker>
            <Fit w={165} size={36} ml={13} color="#3795e0">MD:+38.81</Fit>
            <Fit w={225} size={36} ml={20} color="#e2503f">UPPER:+68.51</Fit>
            <Guide>查看指标战法</Guide>
          </PanelRow>
          <PanelRow $h={34}><Fit w={215} size={36} color="#3a8f35">LOWER:+9.10</Fit></PanelRow>
        </Panel>

        <Panel $h={146}>
          <PanelPlot><MacdPlot /></PanelPlot>
          <PanelRow $h={47}>
            <Picker $w={290}><Fit w={234} size={36}>MACD(12,26,9)</Fit><Down /></Picker>
            <Fit w={192} size={36} ml={13} color="#e2503f">MACD:+1.85</Fit>
            <Fit w={170} size={36} ml={18} color="#e2e2e2">DIFF:+8.88</Fit>
            <Guide>查看指标战法</Guide>
          </PanelRow>
          <PanelRow $h={34}><Fit w={161} size={36} color="#ea7742">DEA:+7.95</Fit></PanelRow>
        </Panel>

        <Bottom>
          <Tools>
            <Sector>
              <svg width="27" height="15" viewBox="0 0 27 15"><path d="M0 15L13.500 0L27 15Z" fill="#b9b9b9" /></svg>
              <SectorName>计算机应用</SectorName>
              <Fit w={110} size={37} color="#f01414">0.49%</Fit>
            </Sector>
            <Tool><DocIcon /><ToolLabel>下单</ToolLabel></Tool>
            <Tool><KitIcon /><ToolLabel>诊股</ToolLabel></Tool>
            <Tool><AddIcon /><ToolLabel>加自选</ToolLabel></Tool>
            <Tool><MenuIcon /><ToolLabel>功能</ToolLabel></Tool>
          </Tools>
          <NavBar>
            <svg width="46" height="36" viewBox="0 0 46 36"><path d="M3 3H43M3 18H43M3 33H43" stroke="#bdbdbd" strokeWidth="6" strokeLinecap="round" /></svg>
            <Slot $ml={221}>
              <svg width="52" height="36" viewBox="0 0 52 36"><rect x="3" y="3" width="46" height="30" rx="15" fill="none" stroke="#bdbdbd" strokeWidth="6" /></svg>
            </Slot>
            <Slot $ml={238}>
              <svg width="45" height="40" viewBox="0 0 45 40">
                <path d="M4 20H42M20 3L3.500 20L20 37" fill="none" stroke="#bdbdbd" strokeWidth="5.600" strokeLinecap="round" strokeLinejoin="round" />
              </svg>
            </Slot>
          </NavBar>
          <Watermark>
            <Fit w={54} size={27} weight={900}>头条</Fit>
            <Fit w={160} size={28} ml={7}>@浪潮财金V</Fit>
          </Watermark>
        </Bottom>
      </Page>
    </>
  );
}
